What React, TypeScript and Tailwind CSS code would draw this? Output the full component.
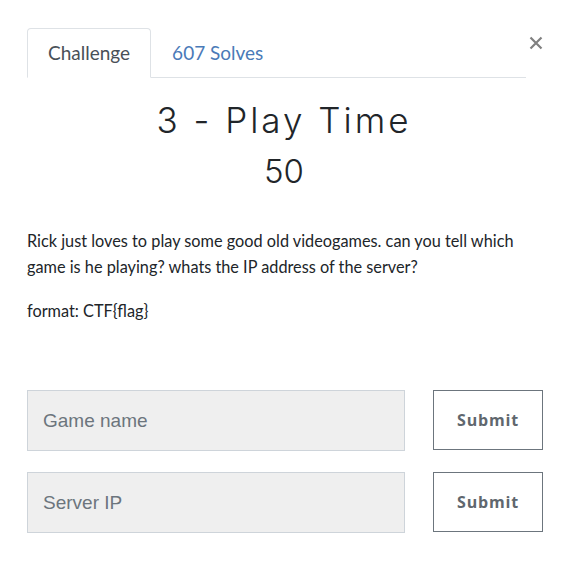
import React, { useState } from 'react';

const App: React.FC = () => {
  const [game, setGame] = useState('');
  const [server, setServer] = useState('');

  const fields = [
    { placeholder: 'Game name', value: game, onChange: setGame },
    { placeholder: 'Server IP', value: server, onChange: setServer },
  ];

  return (
    <div className="w-[568px] h-[569px] bg-white pt-[28px] px-[27px] text-[#212529] font-['Lato',sans-serif]">
      {/* Tabs header */}
      <div className="flex items-start w-[516px]">
        <nav className="flex shrink-0 w-[499px] border-b border-[#dee2e6] h-[50px]">
          <div className="h-[50px] px-[20px] flex items-center border border-[#dee2e6] border-b-white rounded-t-[4px] bg-white text-[19px] text-[#495057]">
            Challenge
          </div>
          <div className="h-[50px] px-[21px] flex items-center text-[19px] text-[#4a7ab8]">
            607 Solves
          </div>
        </nav>
        <button className="ml-[2px] mt-[7px] w-[16px] h-[16px] shrink-0 flex items-center justify-center text-[#808080]">
          <svg width="14" height="14" viewBox="0 0 14 14">
            <path d="M1.5 1.5 L12.5 12.5 M12.5 1.5 L1.5 12.5" stroke="currentColor" strokeWidth="2.2" />
          </svg>
        </button>
      </div>

      {/* Title */}
      <div className="text-center">
        <h3 className="mt-[21px] text-[35px] leading-[42px] font-light tracking-[3px] font-['Inter',sans-serif]">
          3 - Play Time
        </h3>
        <h4 className="mt-[10px] text-[33px] leading-[40px] font-light font-['Inter',sans-serif]">50</h4>
      </div>

      {/* Description */}
      <div className="mt-[37px] text-[16.3px] leading-[26px]">
        <p>
          Rick just loves to play some good old videogames. can you tell which game is he playing? whats the IP
          address of the server?
        </p>
        <p className="mt-[18px]">format: CTF{'{'}flag{'}'}</p>
      </div>

      {/* Answer fields */}
      <div className="mt-[66px] flex flex-col gap-[21px]">
        {fields.map((f, i) => (
          <div key={i} className="flex items-start">
            <input
              value={f.value}
              onChange={(e) => f.onChange(e.target.value)}
              placeholder={f.placeholder}
              className="shrink-0 w-[378px] h-[61px] bg-[#efefef] border border-[#ced4da] px-[15px] text-[19px] font-['Liberation_Sans',sans-serif] text-[#495057] placeholder:text-[#6c757d] outline-none"
            />
            <button className="shrink-0 ml-[28px] w-[110px] h-[60px] border border-[#6c757d] bg-white text-[16px] font-bold tracking-[0.8px] text-[#60676e] font-['Open_Sans',sans-serif]">
              Submit
            </button>
          </div>
        ))}
      </div>
    </div>
  );
};

export default App;
